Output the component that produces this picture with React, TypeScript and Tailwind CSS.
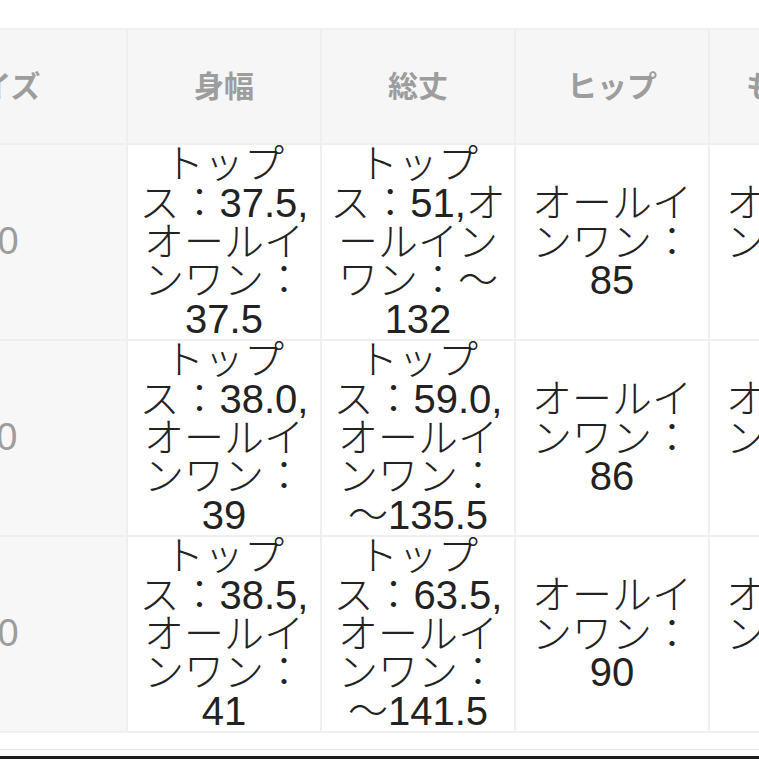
import React from 'react';

interface SizeRow {
  size: string;
  width: string;
  length: string;
  hip: string;
  thigh: string;
}

const headers = ['身幅', '総丈', 'ヒップ', 'もも周り'];

const rows: SizeRow[] = [
  {
    size: '100',
    width: 'トップス：37.5,オールインワン：37.5',
    length: 'トップス：51,オールインワン：～132',
    hip: 'オールインワン：85',
    thigh: 'オールインワン：48',
  },
  {
    size: '110',
    width: 'トップス：38.0,オールインワン：39',
    length: 'トップス：59.0,オールインワン：～135.5',
    hip: 'オールインワン：86',
    thigh: 'オールインワン：50',
  },
  {
    size: '120',
    width: 'トップス：38.5,オールインワン：41',
    length: 'トップス：63.5,オールインワン：～141.5',
    hip: 'オールインワン：90',
    thigh: 'オールインワン：52',
  },
];

export default function App() {
  return (
    <div
      className="w-[759px] h-[759px] overflow-hidden bg-white flex flex-col"
      style={{ fontFamily: '"Liberation Sans", "Noto Sans CJK JP", sans-serif' }}
    >
      <div className="pt-[28px] flex-1">
        <table className="ml-[-136px] border-separate [border-spacing:2px] bg-[#efefef] table-fixed">
          <thead>
            <tr>
              <th className="w-[260px] min-w-[260px] h-[113px] bg-[#f6f6f6] text-[30px] font-bold text-[#9d9d9d] text-center align-middle">
                サイズ
              </th>
              {headers.map((h) => (
                <th
                  key={h}
                  className="w-[192px] min-w-[192px] h-[113px] bg-[#f6f6f6] text-[30px] font-bold text-[#9d9d9d] text-center align-middle whitespace-nowrap"
                >
                  {h}
                </th>
              ))}
            </tr>
          </thead>
          <tbody>
            {rows.map((row) => (
              <tr key={row.size}>
                <th className="bg-[#f7f7f7] pr-[18px] text-[38px] font-normal text-[#9d9d9d] text-center align-middle">
                  {row.size}
                </th>
                {[row.width, row.length, row.hip, row.thigh].map((v, i) => (
                  <td
                    key={i}
                    className="bg-white p-0 text-[40px] font-light leading-[38.8px] text-[#222] text-center align-middle"
                  >
                    {v}
                  </td>
                ))}
              </tr>
            ))}
          </tbody>
        </table>
      </div>
      <div className="border-t border-[#e6e6e6] h-[7px] bg-white" />
      <div className="h-[3px] bg-[#1c1c1c]" />
    </div>
  );
}
